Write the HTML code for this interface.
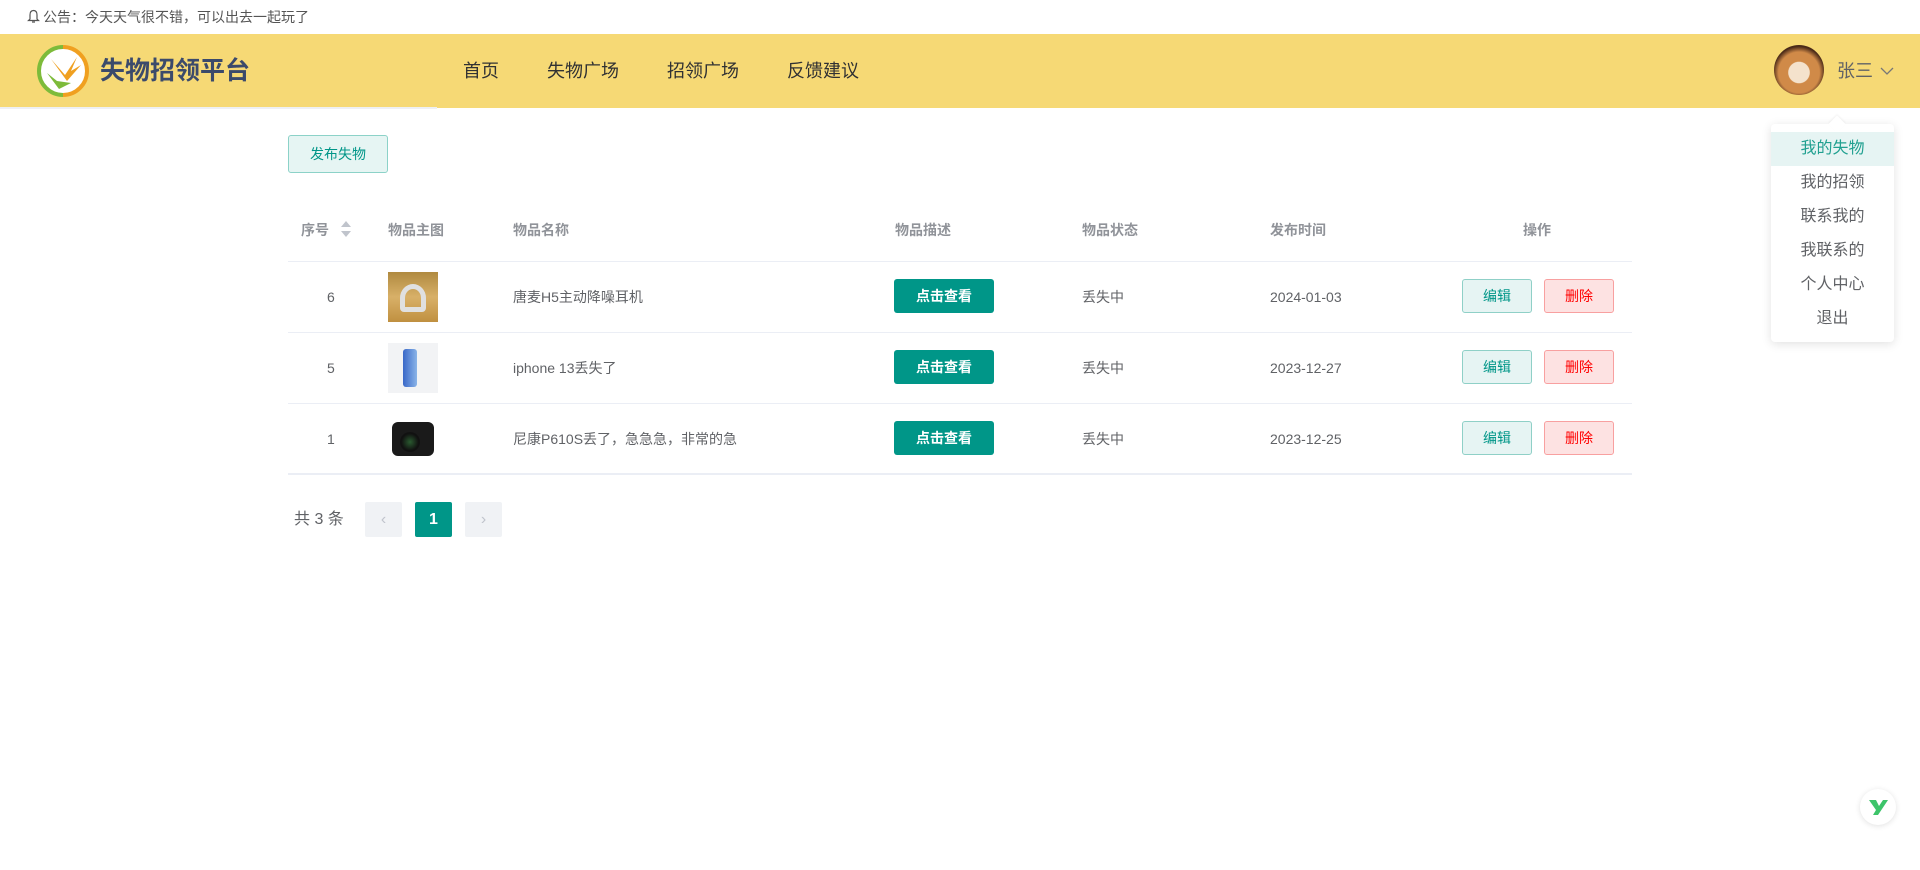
<!DOCTYPE html>
<html><head><meta charset="utf-8">
<style>
*{margin:0;padding:0;box-sizing:border-box}
body{width:1920px;height:870px;background:#fff;font-family:"Liberation Sans","Noto Sans CJK SC",sans-serif;position:relative;overflow:hidden;color:#606266}
.a{position:absolute}
.notice{left:43px;top:8px;font-size:14px;color:#555;line-height:18px}
.hdr{left:0;top:34px;width:1920px;height:74px;background:#f6d975}
.title{left:100px;top:53px;font-size:25px;font-weight:bold;color:#3b4a6b;line-height:36px}
.nav{top:58px;font-size:18px;color:#303133;line-height:26px}
.th{top:220px;font-size:14px;font-weight:bold;color:#909399;line-height:20px}
.td{font-size:14px;color:#606266;line-height:20px}
.line{left:288px;width:1344px;height:1px;background:#ebeef5}
.view{width:100px;height:34px;background:#009688;color:#fff;font-size:14px;font-weight:bold;border-radius:3px;text-align:center;line-height:34px}
.ed{width:70px;height:34px;background:#e6f4f3;border:1px solid #8fd0c7;color:#009688;font-size:14px;border-radius:3px;text-align:center;line-height:32px}
.del{width:70px;height:34px;background:#fde2e2;border:1px solid #f8a0a0;color:#f00;font-size:14px;border-radius:3px;text-align:center;line-height:32px}
.dd{font-size:16px;color:#606266;width:123px;text-align:center;line-height:34px;left:1771px}
.pg{width:37px;height:35px;background:#f0f2f5;border-radius:2px;color:#c0c4cc;text-align:center;line-height:35px;font-size:16px;top:502px}
</style></head><body>
<svg class="a" style="left:27px;top:9px" width="13" height="15" viewBox="0 0 13 15"><path d="M6.5 1.5 C3.5 1.5 3 4 3 6 V10 L1.5 11.5 H11.5 L10 10 V6 C10 4 9.5 1.5 6.5 1.5Z M5 13 H8" fill="none" stroke="#555" stroke-width="1.2"/></svg>
<div class="a notice">公告：今天天气很不错，可以出去一起玩了</div>
<div class="a hdr"></div>
<div class="a" style="left:0;top:107px;width:437px;height:2px;background:#eef0f3"></div>
<svg class="a" style="left:37px;top:45px" width="52" height="52" viewBox="0 0 52 52">
<circle cx="26" cy="26" r="25" fill="#fff"/>
<path d="M26 2 A24 24 0 0 1 50 26 A24 24 0 0 1 26 50" fill="none" stroke="#f0a020" stroke-width="4"/>
<path d="M26 50 A24 24 0 0 1 2 26 A24 24 0 0 1 26 2" fill="none" stroke="#7dbb3a" stroke-width="4"/>
<path d="M14 14 L28 30 L40 12 L34 26 L44 20 L30 36Z" fill="#f0a020"/>
<path d="M10 28 L22 44 L34 38 L20 36Z" fill="#7dbb3a"/>
</svg>
<div class="a title">失物招领平台</div>
<div class="a nav" style="left:463px">首页</div>
<div class="a nav" style="left:547px">失物广场</div>
<div class="a nav" style="left:667px">招领广场</div>
<div class="a nav" style="left:787px">反馈建议</div>
<div class="a" style="left:1774px;top:45px;width:50px;height:50px;border-radius:50%;background:radial-gradient(circle at 50% 55%,#f4e2cc 0 28%,#d08a48 30% 55%,#4a2a18 70%)"></div>
<div class="a" style="left:1837px;top:58px;font-size:18px;color:#606266;line-height:26px">张三</div>
<svg class="a" style="left:1880px;top:66px" width="14" height="10"><path d="M1 2 L7 8 L13 2" fill="none" stroke="#777" stroke-width="1.3"/></svg>
<div class="a" style="left:1771px;top:124px;width:123px;height:218px;background:#fff;border-radius:4px;box-shadow:0 2px 10px rgba(0,0,0,.12)"></div>
<div class="a" style="left:1831px;top:118px;width:12px;height:12px;background:#fff;transform:rotate(45deg);box-shadow:-1px -1px 2px rgba(0,0,0,.05)"></div>
<div class="a" style="left:1771px;top:132px;width:123px;height:34px;background:#e6f4f3"></div>
<div class="a dd" style="top:132px;color:#20a090">我的失物</div>
<div class="a dd" style="top:166px">我的招领</div>
<div class="a dd" style="top:200px">联系我的</div>
<div class="a dd" style="top:234px">我联系的</div>
<div class="a dd" style="top:268px">个人中心</div>
<div class="a dd" style="top:302px">退出</div>

<div class="a" style="left:288px;top:135px;width:100px;height:38px;background:#e6f5f3;border:1px solid #8cd2c8;border-radius:3px;color:#009688;font-size:14px;text-align:center;line-height:36px">发布失物</div>

<div class="a th" style="left:301px">序号</div>
<svg class="a" style="left:340px;top:219px" width="12" height="20"><path d="M6 2 L11 8 H1Z M6 18 L11 12 H1Z" fill="#c0c4cc"/></svg>
<div class="a th" style="left:388px">物品主图</div>
<div class="a th" style="left:513px">物品名称</div>
<div class="a th" style="left:895px">物品描述</div>
<div class="a th" style="left:1082px">物品状态</div>
<div class="a th" style="left:1270px">发布时间</div>
<div class="a th" style="left:1523px">操作</div>
<div class="a line" style="top:261px"></div>
<div class="a line" style="top:332px"></div>
<div class="a line" style="top:403px"></div>
<div class="a line" style="top:473px;height:2px"></div>

<div class="a td" style="left:327px;top:287px">6</div>
<div class="a" style="left:388px;top:272px;width:50px;height:50px;background:linear-gradient(#b08a40,#d8b068 50%,#c09040)"><div style="margin:12px 0 0 12px;width:26px;height:28px;border:5px solid #e0e0e0;border-radius:50% 50% 4px 4px"></div></div>
<div class="a td" style="left:513px;top:287px">唐麦H5主动降噪耳机</div>
<div class="a view" style="left:894px;top:279px">点击查看</div>
<div class="a td" style="left:1082px;top:287px">丢失中</div>
<div class="a td" style="left:1270px;top:287px">2024-01-03</div>
<div class="a ed" style="left:1462px;top:279px">编辑</div>
<div class="a del" style="left:1544px;top:279px">删除</div>

<div class="a td" style="left:327px;top:358px">5</div>
<div class="a" style="left:388px;top:343px;width:50px;height:50px;background:#f2f3f5"><div style="margin:6px 0 0 15px;width:14px;height:38px;border-radius:3px;background:linear-gradient(90deg,#3a68c8,#8ab4e8)"></div></div>
<div class="a td" style="left:513px;top:358px">iphone 13丢失了</div>
<div class="a view" style="left:894px;top:350px">点击查看</div>
<div class="a td" style="left:1082px;top:358px">丢失中</div>
<div class="a td" style="left:1270px;top:358px">2023-12-27</div>
<div class="a ed" style="left:1462px;top:350px">编辑</div>
<div class="a del" style="left:1544px;top:350px">删除</div>

<div class="a td" style="left:327px;top:429px">1</div>
<div class="a" style="left:392px;top:422px;width:42px;height:34px;background:#1a1a1a;border-radius:6px"><div style="margin:10px 0 0 8px;width:20px;height:20px;border-radius:50%;background:radial-gradient(#2a5a30,#111 60%)"></div></div>
<div class="a td" style="left:513px;top:429px">尼康P610S丢了，急急急，非常的急</div>
<div class="a view" style="left:894px;top:421px">点击查看</div>
<div class="a td" style="left:1082px;top:429px">丢失中</div>
<div class="a td" style="left:1270px;top:429px">2023-12-25</div>
<div class="a ed" style="left:1462px;top:421px">编辑</div>
<div class="a del" style="left:1544px;top:421px">删除</div>

<div class="a" style="left:294px;top:509px;font-size:16px;color:#606266;line-height:22px">共 3 条</div>
<div class="a pg" style="left:365px">‹</div>
<div class="a pg" style="left:415px;background:#009688;color:#fff;font-weight:bold">1</div>
<div class="a pg" style="left:465px">›</div>

<div class="a" style="left:1860px;top:789px;width:36px;height:36px;border-radius:50%;background:#fff;box-shadow:0 1px 6px rgba(0,0,0,.12)"></div>
<svg class="a" style="left:1868px;top:798px" width="20" height="18"><path d="M1 2 H8 L11 8 L15 2 H20 L10 17 H5 L8 12Z" fill="#3dc46a"/></svg>
</body></html>
